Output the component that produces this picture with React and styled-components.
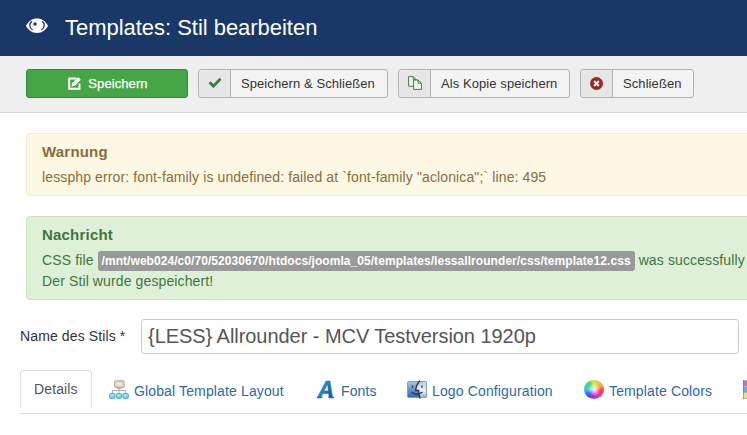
import React from "react";
import styled, { createGlobalStyle } from "styled-components";

const App = () => {
  return (
    <Page>
      <GlobalStyle />
      <Header>
        <EyeIcon />
        <PageTitle>Templates: Stil bearbeiten</PageTitle>
      </Header>
      <Toolbar>
        <SaveButton>
          <EditIcon />
          Speichern
        </SaveButton>
        <ToolButton $width={190}>
          <ButtonIcon>
            <CheckIcon />
          </ButtonIcon>
          <ButtonText>Speichern &amp; Schließen</ButtonText>
        </ToolButton>
        <ToolButton $width={172}>
          <ButtonIcon>
            <CopyIcon />
          </ButtonIcon>
          <ButtonText>Als Kopie speichern</ButtonText>
        </ToolButton>
        <ToolButton $width={114}>
          <ButtonIcon>
            <CancelIcon />
          </ButtonIcon>
          <ButtonText>Schließen</ButtonText>
        </ToolButton>
      </Toolbar>
      <Messages>
        <Alert $kind="warning">
          <h4>Warnung</h4>
          <p>
            lessphp error: font-family is undefined: failed at `font-family
            "aclonica";` line: 495
          </p>
        </Alert>
        <Alert $kind="success">
          <h4>Nachricht</h4>
          <p>
            CSS file{" "}
            <PathLabel>
              /mnt/web024/c0/70/52030670/htdocs/joomla_05/templates/lessallrounder/css/template12.css
            </PathLabel>{" "}
            was successfully
          </p>
          <p>Der Stil wurde gespeichert!</p>
        </Alert>
      </Messages>
      <FormRow>
        <label htmlFor="style-name">Name des Stils *</label>
        <NameInput
          id="style-name"
          defaultValue="{LESS} Allrounder - MCV Testversion 1920p"
        />
      </FormRow>
      <Tabs>
        <ActiveTab>Details</ActiveTab>
        <Tab $width={207}>
          <SitemapIcon />
          Global Template Layout
        </Tab>
        <Tab $width={91}>
          <FontIcon />
          Fonts
        </Tab>
        <Tab $width={177}>
          <FinderIcon />
          Logo Configuration
        </Tab>
        <Tab $width={159}>
          <ColorWheel />
          Template Colors
        </Tab>
        <Tab>
          <RowsIcon />
        </Tab>
      </Tabs>
    </Page>
  );
};

export default App;

const EyeIcon = () => (
  <svg width="22" height="16" viewBox="0 0 22 16">
    <path
      d="M0 7.800C2.400 3.200 6.200.5 11 .5s8.600 2.700 11 7.300c-2.400 4.700-6.200 7.200-11 7.200S2.400 12.500 0 7.800z"
      fill="#fff"
    />
    <path
      d="M5.800 3.400C2.900 5.500 3 9.300 6.600 12M16.200 3.400c2.900 2.100 2.800 5.900-.8 8.600"
      fill="none"
      stroke="#1a3867"
      strokeWidth="1.300"
    />
    <circle cx="9" cy="6" r="1.700" fill="#1a3867" />
  </svg>
);

const EditIcon = () => (
  <svg width="13" height="13" viewBox="0 0 13 13">
    <path
      d="M8.500 1.500H1.200v10.300h10.300V6.500"
      fill="none"
      stroke="#fff"
      strokeWidth="2"
    />
    <path d="M3.500 9.500l.7-3.300L10.200.2l2.600 2.600-6 6z" fill="#fff" />
  </svg>
);

const CheckIcon = () => (
  <svg width="14" height="12" viewBox="0 0 14 12">
    <path d="M.5 6.300l2-2 3 2.700L11.600.8l1.900 1.900-8 8.500z" fill="#3d7a45" />
  </svg>
);

const CopyIcon = () => (
  <svg width="14" height="14" viewBox="0 0 14 14" stroke="#468049">
    <path d="M.6.600h4.600l3 3v6.600H.6z" fill="#f2f2f2" />
    <path d="M5.200.600v3h3" fill="none" />
    <path d="M5.600 4h4.400l3.400 3.200v6.200H5.600z" fill="#f2f2f2" />
    <path d="M10 4v3.200h3.400" fill="none" />
  </svg>
);

const CancelIcon = () => (
  <svg width="13" height="13" viewBox="0 0 13 13">
    <circle cx="6.500" cy="6.500" r="6.500" fill="#942a25" />
    <path d="M4.100 4.100l4.800 4.800M8.900 4.100L4.100 8.900" stroke="#f3eaea" strokeWidth="2.100" />
  </svg>
);

const SitemapIcon = () => (
  <svg width="20" height="20" viewBox="0 0 20 20">
    <path d="M10 8v5M3.500 14v-3.500h13V14" fill="none" stroke="#a6b1b4" />
    <rect x="5.500" y=".8" width="9.500" height="6.700" rx=".8" fill="#d8d1c1" stroke="#b5ad9c" />
    <rect x="7.500" y="2.500" width="5.500" height="3" fill="#eee9df" />
    <path d="M8 8.500h4.500" stroke="#bdb5a5" />
    <g fill="#82cfe8" stroke="#53a7c8">
      <rect x=".6" y="13.600" width="5.300" height="4.800" rx="1" />
      <rect x="7.300" y="13.600" width="5.300" height="4.800" rx="1" />
      <rect x="14" y="13.600" width="5.300" height="4.800" rx="1" />
    </g>
    <path d="M1.800 15.200h3M8.500 15.200h3M15.200 15.200h3" stroke="#d4f2fa" />
  </svg>
);

const FontIcon = () => (
  <svg width="20" height="20" viewBox="0 0 20 20" overflow="visible">
    <defs>
      <linearGradient id="letter" x1="0" y1="0" x2="1" y2="1">
        <stop offset="0" stopColor="#35b3e6" />
        <stop offset="1" stopColor="#123f8c" />
      </linearGradient>
    </defs>
    <text
      x="1.500"
      y="17.500"
      fill="url(#letter)"
      stroke="url(#letter)"
      strokeWidth=".5"
      fontFamily="'Liberation Sans', sans-serif"
      fontSize="23"
      fontWeight="bold"
      fontStyle="italic"
    >
      A
    </text>
    <path d="M1 17.300h5.500M12.500 17.300h5.500" stroke="#2467a8" strokeWidth="1.200" />
  </svg>
);

const FinderIcon = () => (
  <svg width="20" height="20" viewBox="0 0 20 20">
    <defs>
      <linearGradient id="face" x1="0" y1="0" x2="0" y2="1">
        <stop offset="0" stopColor="#a9c4e0" />
        <stop offset="1" stopColor="#2d66ac" />
      </linearGradient>
      <linearGradient id="side" x1="0" y1="0" x2="0" y2="1">
        <stop offset="0" stopColor="#b8cbe0" />
        <stop offset=".6" stopColor="#edf4fa" />
        <stop offset="1" stopColor="#91b3d6" />
      </linearGradient>
    </defs>
    <rect x=".5" y="1.500" width="19" height="16" rx="1" fill="url(#face)" stroke="#839fbd" />
    <path d="M12 2Q9 6 9 10.500h3q-.5 3 .5 6.500H19V2z" fill="url(#side)" />
    <path
      d="M13 .5Q9 5 8.700 10.500h3q-.3 4 1.500 8M4.500 12q5 4.500 11 0M5.500 5.500v2.300M15 5.500v2.300"
      fill="none"
      stroke="#26364d"
      strokeWidth="1.300"
    />
  </svg>
);

const RowsIcon = () => (
  <svg width="20" height="20" viewBox="0 0 20 20">
    <path d="M0 1h20v5H0z" fill="#e45bd3" />
    <path d="M0 7h20v5H0z" fill="#55b5ee" />
    <path d="M0 13h20v5H0z" fill="#f4e35d" />
    <path d="M0 .5h20M0 6.500h20M0 12.500h20M0 18.500h20M.5 0v19" stroke="#777" strokeOpacity=".55" />
  </svg>
);

const GlobalStyle = createGlobalStyle`
  * {
    box-sizing: border-box;
  }

  body {
    margin: 0;
    background: #fefefe;
    color: #333;
    font-family: "Liberation Sans", Arial, sans-serif;
    font-size: 14px;
    line-height: 20px;
    letter-spacing: 0.12px;
  }
`;

const Page = styled.div`
  height: 435px;
  overflow: hidden;
`;

const Header = styled.header`
  display: flex;
  align-items: center;
  height: 56px;
  padding: 0 26px;
  background: #1a3867;

  svg {
    margin: 0 17px 5px 0;
  }
`;

const PageTitle = styled.h1`
  margin: 0;
  color: #fff;
  font-size: 22px;
  line-height: 30px;
  font-weight: normal;
  letter-spacing: -0.03px;
`;

const Toolbar = styled.div`
  display: flex;
  gap: 10px;
  height: 57px;
  padding: 13px 26px 0;
  background: #efefef;
  border-bottom: 1px solid #d8d8d8;
`;

const Button = styled.button`
  display: flex;
  align-items: center;
  height: 29px;
  padding: 0;
  border-radius: 3px;
  font-family: inherit;
  font-size: 13px;
  line-height: 24px;
  letter-spacing: 0.08px;
  white-space: nowrap;
  cursor: pointer;
`;

const SaveButton = styled(Button)`
  justify-content: center;
  gap: 7px;
  width: 162px;
  padding-left: 2px;
  border: 1px solid #36873a;
  background: #46a546;
  color: #fff;
  -webkit-text-stroke: 0.25px #fff;

  svg {
    margin-bottom: 1px;
  }
`;

const ToolButton = styled(Button)`
  width: ${(props) => props.$width}px;
  border: 1px solid #b3b3b3;
  background: #f3f3f3;
  color: #333;
`;

const ButtonIcon = styled.span`
  display: flex;
  align-items: center;
  justify-content: center;
  width: 32px;
  height: 100%;
  padding-bottom: 1px;
  border-right: 1px solid #b3b3b3;
  border-radius: 3px 0 0 3px;
  background: #e6e6e6;
`;

const ButtonText = styled.span`
  padding-left: 10px;
`;

const Messages = styled.section`
  display: flex;
  flex-direction: column;
  gap: 20px;
  padding: 20px 0 0 26px;
`;

const alertColors = {
  warning: { text: "#8a6d3b", back: "#fcf8e3", border: "#faebcc" },
  success: { text: "#3c763d", back: "#dff0d8", border: "#d0e6c1" },
};

const Alert = styled.div`
  width: 760px;
  padding: 8px 15px;
  border: 1px solid ${(props) => alertColors[props.$kind].border};
  border-radius: 4px;
  background: ${(props) => alertColors[props.$kind].back};
  color: ${(props) => alertColors[props.$kind].text};
  white-space: nowrap;

  h4 {
    margin: 0 0 5px;
    font-size: 15px;
    line-height: 20px;
    letter-spacing: 0.2px;
  }

  p {
    margin: 0;
  }
`;

const PathLabel = styled.span`
  display: inline-block;
  margin-top: 1px;
  padding: 0 4px;
  border-radius: 3px;
  background: #999;
  color: #fff;
  font-size: 12px;
  font-weight: bold;
  letter-spacing: 0.055px;
  vertical-align: top;
`;

const FormRow = styled.div`
  display: flex;
  align-items: center;
  width: 719px;
  margin: 19px 0 0 20px;

  label {
    width: 121px;
    padding-bottom: 2px;
  }
`;

const NameInput = styled.input`
  width: 598px;
  height: 35px;
  padding: 0 6px;
  border: 1px solid #ccc;
  border-radius: 3px;
  background: #fff;
  color: #555;
  font-family: inherit;
  font-size: 20px;
  letter-spacing: -0.05px;
`;

const Tabs = styled.nav`
  display: flex;
  height: 44px;
  margin: 16px 0 0 20px;
  border-bottom: 1px solid #ddd;
  overflow: hidden;
`;

const ActiveTab = styled.div`
  flex: none;
  width: 72px;
  height: 38px;
  padding: 8px 13px;
  border: 1px solid #ddd;
  border-bottom: 0;
  border-radius: 4px 4px 0 0;
  color: #555;
`;

const Tab = styled.div`
  display: flex;
  flex: none;
  gap: 5px;
  width: ${(props) => (props.$width ? `${props.$width}px` : "auto")};
  padding: 11px 0 0 17px;
  color: #31699f;
  white-space: nowrap;
  letter-spacing: 0.135px;
  cursor: pointer;

  svg {
    flex: none;
    margin-top: -1px;
  }
`;

const ColorWheel = styled.span`
  width: 20px;
  height: 19px;
  margin-top: -1px;
  border-radius: 50%;
  background:
    radial-gradient(circle, #fff 0, rgba(255, 255, 255, 0) 48%),
    conic-gradient(#d4ec3c, #f8a340 65deg, #ee3c45 100deg, #ee30b5 145deg, #8a35e8 190deg, #3c55ee 230deg, #35cbe8 270deg, #3cdc68 320deg, #d4ec3c);
  box-shadow: inset 0 0 1px #8b8b8b;
`;
